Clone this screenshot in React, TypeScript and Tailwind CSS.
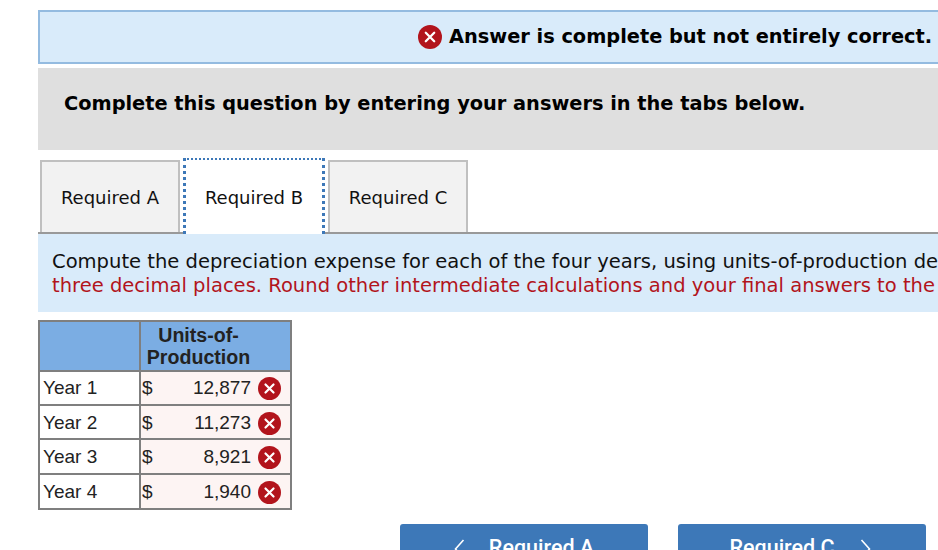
const verdana = "font-['DejaVu_Sans',sans-serif]"

const rows = [
  { label: "Year 1", value: "12,877", height: "h-[34px]", nudge: "" },
  { label: "Year 2", value: "11,273", height: "h-[34px]", nudge: "pt-[2px]" },
  { label: "Year 3", value: "8,921", height: "h-[35px]", nudge: "pt-[2px]" },
  { label: "Year 4", value: "1,940", height: "h-[35px]", nudge: "pt-[1px]" },
]

function WrongIcon({ size }: { size: number }) {
  return (
    <svg width={size} height={size} viewBox="0 0 24 24" className="shrink-0">
      <circle cx="12" cy="12" r="12" fill="#b2141c" />
      <path d="M7.8 7.8 L16.2 16.2 M16.2 7.8 L7.8 16.2" stroke="#fff" strokeWidth="2.3" strokeLinecap="round" />
    </svg>
  )
}

function Chevron({ left }: { left?: boolean }) {
  return (
    <svg width="11" height="20" viewBox="0 0 11 20" fill="none" className="mt-[7px] shrink-0">
      <path d={left ? "M9.5 1 L1.5 10 L9.5 19" : "M1.5 1 L9.5 10 L1.5 19"} stroke="#fff" strokeWidth="1.6" />
    </svg>
  )
}

function Tab({ label, active }: { label: string; active?: boolean }) {
  if (active) {
    return (
      <div className="relative z-10 -mb-[2px] -mt-[2px] flex h-[76px] w-[142px] items-center justify-center border-x-[3px] border-t-[2px] border-dotted border-[#3d78b8] bg-white pt-[1px] text-[18px] text-[#111]">
        {label}
      </div>
    )
  }
  return (
    <div className="flex h-[72px] w-[140px] items-center justify-center border-2 border-b-0 border-[#c0c0c0] bg-[#f2f2f2] text-[18px] text-[#111]">
      {label}
    </div>
  )
}

export default function App() {
  return (
    <div className={`h-[550px] w-[938px] overflow-hidden bg-white pl-[38px] pt-[10px] ${verdana}`}>
      <div className="w-[920px]">
        <div className="flex h-[54px] items-center border-2 border-[#94bbe0] bg-[#d9ebfa] pl-[378px]">
          <WrongIcon size={24} />
          <span className="ml-[7px] whitespace-nowrap text-[19.35px] font-bold text-black">Answer is complete but not entirely correct.</span>
        </div>
        <div className="mt-[4px] flex h-[82px] items-start bg-[#dfdfdf] pl-[26px] pt-[22px]">
          <span className="whitespace-nowrap text-[19.35px] font-bold leading-[28px] text-black">Complete this question by entering your answers in the tabs below.</span>
        </div>
        <div className="mt-[10px] flex h-[74px] items-start gap-[3px] border-b-2 border-[#999] pl-[2px]">
          <Tab label="Required A" />
          <Tab label="Required B" active />
          <Tab label="Required C" />
        </div>
        <div className="h-[78px] overflow-hidden whitespace-nowrap bg-[#d9ebfa] pl-[14px] pt-[16px] text-[19.55px] leading-[24px]">
          <p className="text-[#111]">Compute the depreciation expense for each of the four years, using units-of-production depreciation.</p>
          <p className="text-[#b2141c]">three decimal places. Round other intermediate calculations and your final answers to the nearest dollar.</p>
        </div>
      </div>

      <table className="mt-[8px] w-[254px] table-fixed border-collapse border-2 border-[#7f7f7f] font-['Liberation_Sans',sans-serif] text-[19px] text-[#222]">
        <thead>
          <tr className="h-[50px] bg-[#7bade3]">
            <th className="w-[101px] border-2 border-[#7f7f7f]"></th>
            <th className="border-2 border-[#7f7f7f] pr-[34px] text-center text-[19.6px] font-bold leading-[22px]">
              Units-of-
              <br />
              Production
            </th>
          </tr>
        </thead>
        <tbody>
          {rows.map((row) => (
            <tr key={row.label} className={row.height}>
              <td className={`border-2 border-[#7f7f7f] bg-white pl-[3px] ${row.nudge}`}>{row.label}</td>
              <td className={`border-2 border-[#7f7f7f] bg-[#fdf4f3] px-[1px] ${row.nudge}`}>
                <div className="flex items-center">
                  <span>$</span>
                  <span className="ml-auto">{row.value}</span>
                  <span className="ml-[7px] mr-[8px]"><WrongIcon size={23} /></span>
                </div>
              </td>
            </tr>
          ))}
        </tbody>
      </table>

      <div className="ml-[362px] mt-[14px] flex gap-[30px] font-['Roboto',sans-serif] text-[21.5px] font-medium text-white">
        <div className="flex h-[50px] w-[248px] items-start justify-center gap-[24px] rounded-[3px] bg-[#3d78b8] pt-[8px]">
          <Chevron left />
          <span>Required A</span>
        </div>
        <div className="flex h-[50px] w-[248px] items-start justify-center gap-[25px] rounded-[3px] bg-[#3d78b8] pr-[4px] pt-[8px]">
          <span>Required C</span>
          <Chevron />
        </div>
      </div>
    </div>
  )
}
